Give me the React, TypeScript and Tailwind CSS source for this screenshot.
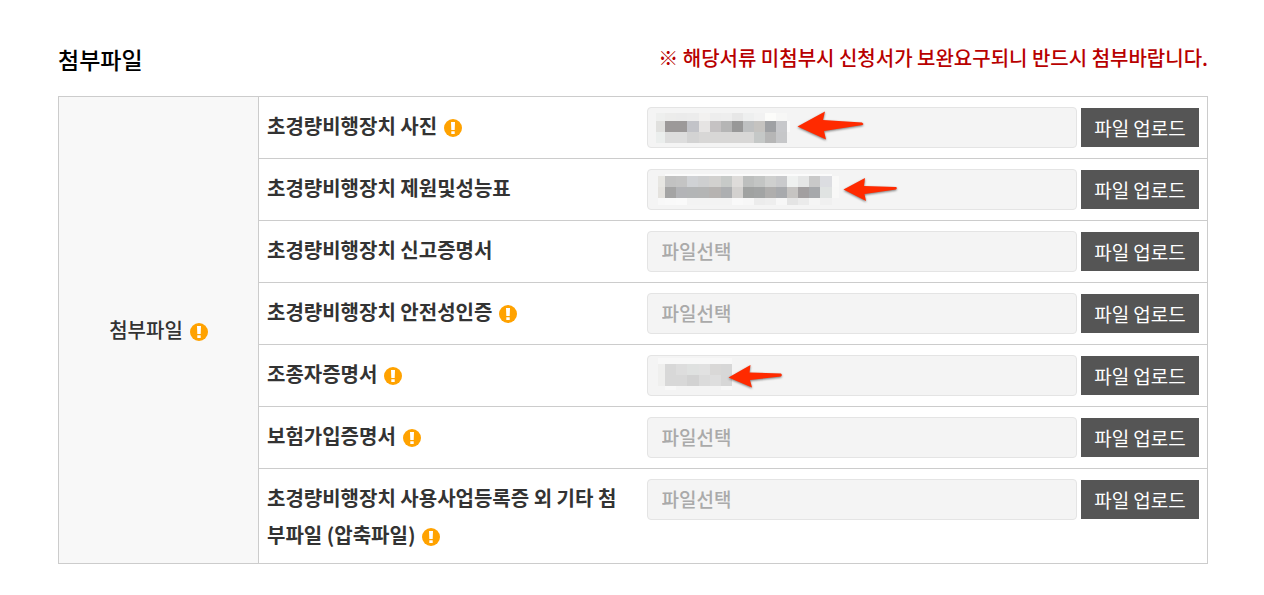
import React from 'react'

type Block = [x: number, y: number, w: number, h: number, fill: string]

type Cover = {
  blocks: Block[]
  arrow: string
}

type FileRow = {
  id: string
  label: string
  notice?: boolean
  cover?: Cover
}

// one strip of mosaic: edges are the x stops, fills go between them
const strip = (edges: number[], y: number, h: number, fills: string[]): Block[] =>
  fills.map((fill, i) => [edges[i], y, edges[i + 1] - edges[i], h, fill])

const photoEdges = [9, 18, 29, 40, 52, 63, 74, 85, 96, 107, 118, 129, 140]
const specEdges = [11, 18, 29, 40, 51, 62, 74, 85, 96, 107, 118, 129, 140, 151, 162, 173, 185, 192]
const pilotEdges = [11, 18, 29, 40, 52, 63, 74, 85]

const photoCover: Cover = {
  blocks: [
    ...strip(photoEdges, 6, 8, ['#eeefee', '#ececeb', '#ebebeb', '#ececec', '#f2f1f0', '#ededed', '#eeeeee', '#e7e7e7', '#eeefef', '#f2f2f2', '#fcfcfa', '#f7f7f6']),
    ...strip([9, 18, 40, 52, 63, 74, 85, 96, 107, 118, 129, 140, 143], 14, 11, ['#e0e0de', '#9c9999', '#c2c3c8', '#e6e4e3', '#c5c2c3', '#b5b5b5', '#989898', '#bec0c1', '#c5c3c0', '#9fa1a4', '#c7c8cb', '#fafafa']),
    ...strip([9, 18, 40, 52, 107, 118, 129, 140], 25, 11, ['#ebeeed', '#dddddd', '#d3d3d3', '#d8d7d6', '#c5c8c7', '#b6b6b6', '#c6c7c9']),
  ],
  arrow: '150.5,19.5 178,4.5 176,13 215,15.5 216.5,17 215.5,18 177,24 179,32.5',
}

const specCover: Cover = {
  blocks: [
    [18, 5, 167, 2, '#fbfbfb'],
    ...strip(specEdges, 7, 11, ['#e7e6e2', '#c2c2c2', '#c4c4c4', '#d0d2d5', '#cecfd0', '#d2d1cf', '#c7cac8', '#dedcda', '#bdbfbe', '#c3c5c4', '#cfd0cf', '#c9cacc', '#eff1f0', '#e5e6e6', '#c9c9c9', '#dcdde1', '#f9f9f8']),
    ...strip(specEdges, 18, 11, ['#e4e2de', '#a4a4a4', '#b3b4b7', '#b3b5b6', '#b4b5b5', '#b6b3b1', '#adafb1', '#d3d1cf', '#a0a2a1', '#a2a4a4', '#afaead', '#a8aaad', '#c6c4c2', '#a29fa0', '#a6a8ab', '#e0e3e2', '#f8f8f7']),
    ...strip(specEdges, 29, 7, ['#f8f8f8', '#f9f9f9', '#fafafa', '#f3f3f3', '#f3f3f3', '#f3f3f3', '#f3f3f3', '#f9f9f9', '#f7f7f7', '#ececec', '#eeeeee', '#f7f7f7', '#e4e4e4', '#ebebeb', '#f5f5f5', '#f0f0f0', '#f4f4f4']),
  ],
  arrow: '196.5,20.5 218,9 217,17 249,18 250,19 249,20.5 217.5,25 219,32',
}

const pilotCover: Cover = {
  blocks: [
    [11, 3, 74, 6, '#f8f8f8'],
    ...strip(pilotEdges, 9, 11, ['#efefee', '#d8d8d8', '#dddddd', '#dfe1e0', '#e1e1e1', '#d9d8d7', '#d7d7d7']),
    ...strip(pilotEdges, 20, 11, ['#efefee', '#d8d8d8', '#d8d8d8', '#d2d2d2', '#dbdbdb', '#dedede', '#d7d7d7']),
    [18, 31, 11, 4, '#f8f8f8'],
    [74, 31, 11, 4, '#f8f8f8'],
  ],
  arrow: '81.5,22.5 103.5,10 102.5,17.5 134,18.5 135,20 134,21.5 103,25 105,32.5',
}

const rows: FileRow[] = [
  { id: 'photo', label: '초경량비행장치 사진', notice: true, cover: photoCover },
  { id: 'spec', label: '초경량비행장치 제원및성능표', cover: specCover },
  { id: 'report', label: '초경량비행장치 신고증명서' },
  { id: 'safety', label: '초경량비행장치 안전성인증', notice: true },
  { id: 'pilot', label: '조종자증명서', notice: true, cover: pilotCover },
  { id: 'insurance', label: '보험가입증명서', notice: true },
  { id: 'etc', label: '초경량비행장치 사용사업등록증 외 기타 첨부파일 (압축파일)', notice: true },
]

const NoticeIcon = () => (
  <svg className="ml-[7px] inline-block size-[18px] align-[-3px]" viewBox="0 0 18 18" aria-hidden="true">
    <circle cx="9" cy="9" r="9" fill="#ffa200" />
    <path d="M7 3h4l-.3 8H7.3z M7.3 12.2h3.4v2.8H7.3z" fill="#fff" />
  </svg>
)

const FileCover = ({ blocks, arrow }: Cover) => (
  <svg
    className="pointer-events-none absolute top-0 left-0 h-[41px] w-[240px] overflow-visible"
    viewBox="0 0 240 41"
    aria-hidden="true"
  >
    {blocks.map(([x, y, w, h, fill]) => (
      <rect key={`${x}-${y}`} x={x} y={y} width={w} height={h} fill={fill} shapeRendering="crispEdges" />
    ))}
    <polygon points={arrow} fill="#ff2a00" className="drop-shadow-[0_1px_1px_rgba(0,0,0,0.5)]" />
  </svg>
)

const App = () => {
  return (
    <main className="bg-white pt-9 pr-14 pb-8 pl-[58px] font-['Noto_Sans_CJK_KR',sans-serif] text-[#333]">
      <div className="mb-4 flex items-start justify-between">
        <h2 className="text-[23px] leading-[46px] font-medium text-black">첨부파일</h2>
        <p className="-mb-1 text-xl leading-[44px] font-medium text-[#b80000]">
          ※ 해당서류 미첨부시 신청서가 보완요구되니 반드시 첨부바랍니다.
        </p>
      </div>

      <table className="-mt-[2px] w-full table-fixed border-collapse border border-[#ccc]">
        <colgroup>
          <col className="w-[200px]" />
          <col className="w-[388px]" />
          <col />
        </colgroup>
        <tbody>
          {rows.map((row, i) => (
            <tr key={row.id} className="border-b border-[#ccc]">
              {i === 0 && (
                <th
                  rowSpan={rows.length}
                  scope="rowgroup"
                  className="border-r border-[#ccc] bg-[#f8f8f8] text-center align-middle text-xl font-medium"
                >
                  첨부파일
                  <NoticeIcon />
                </th>
              )}
              <th scope="row" className="py-[10px] pr-5 pl-2 text-left align-top text-xl leading-[37px] font-bold break-all">
                <label htmlFor={row.id}>{row.label}</label>
                {row.notice && <NoticeIcon />}
              </th>
              <td className="py-[10px] pr-2 align-top">
                <div className="flex items-center gap-1">
                  <div className="relative min-w-0 flex-1">
                    <input
                      id={row.id}
                      type="text"
                      readOnly
                      placeholder={row.cover ? undefined : '파일선택'}
                      className="block h-[41px] w-full rounded-[4px] border border-[#e4e4e4] bg-[#f4f4f4] px-[14px] pb-[2px] text-[19px] font-medium placeholder:text-[#aaa]"
                    />
                    {row.cover && <FileCover {...row.cover} />}
                  </div>
                  <button type="button" className="h-[39px] w-[118px] shrink-0 bg-[#555] pt-[2px] text-[19px] text-white">
                    파일 업로드
                  </button>
                </div>
              </td>
            </tr>
          ))}
        </tbody>
      </table>
    </main>
  )
}

export default App
